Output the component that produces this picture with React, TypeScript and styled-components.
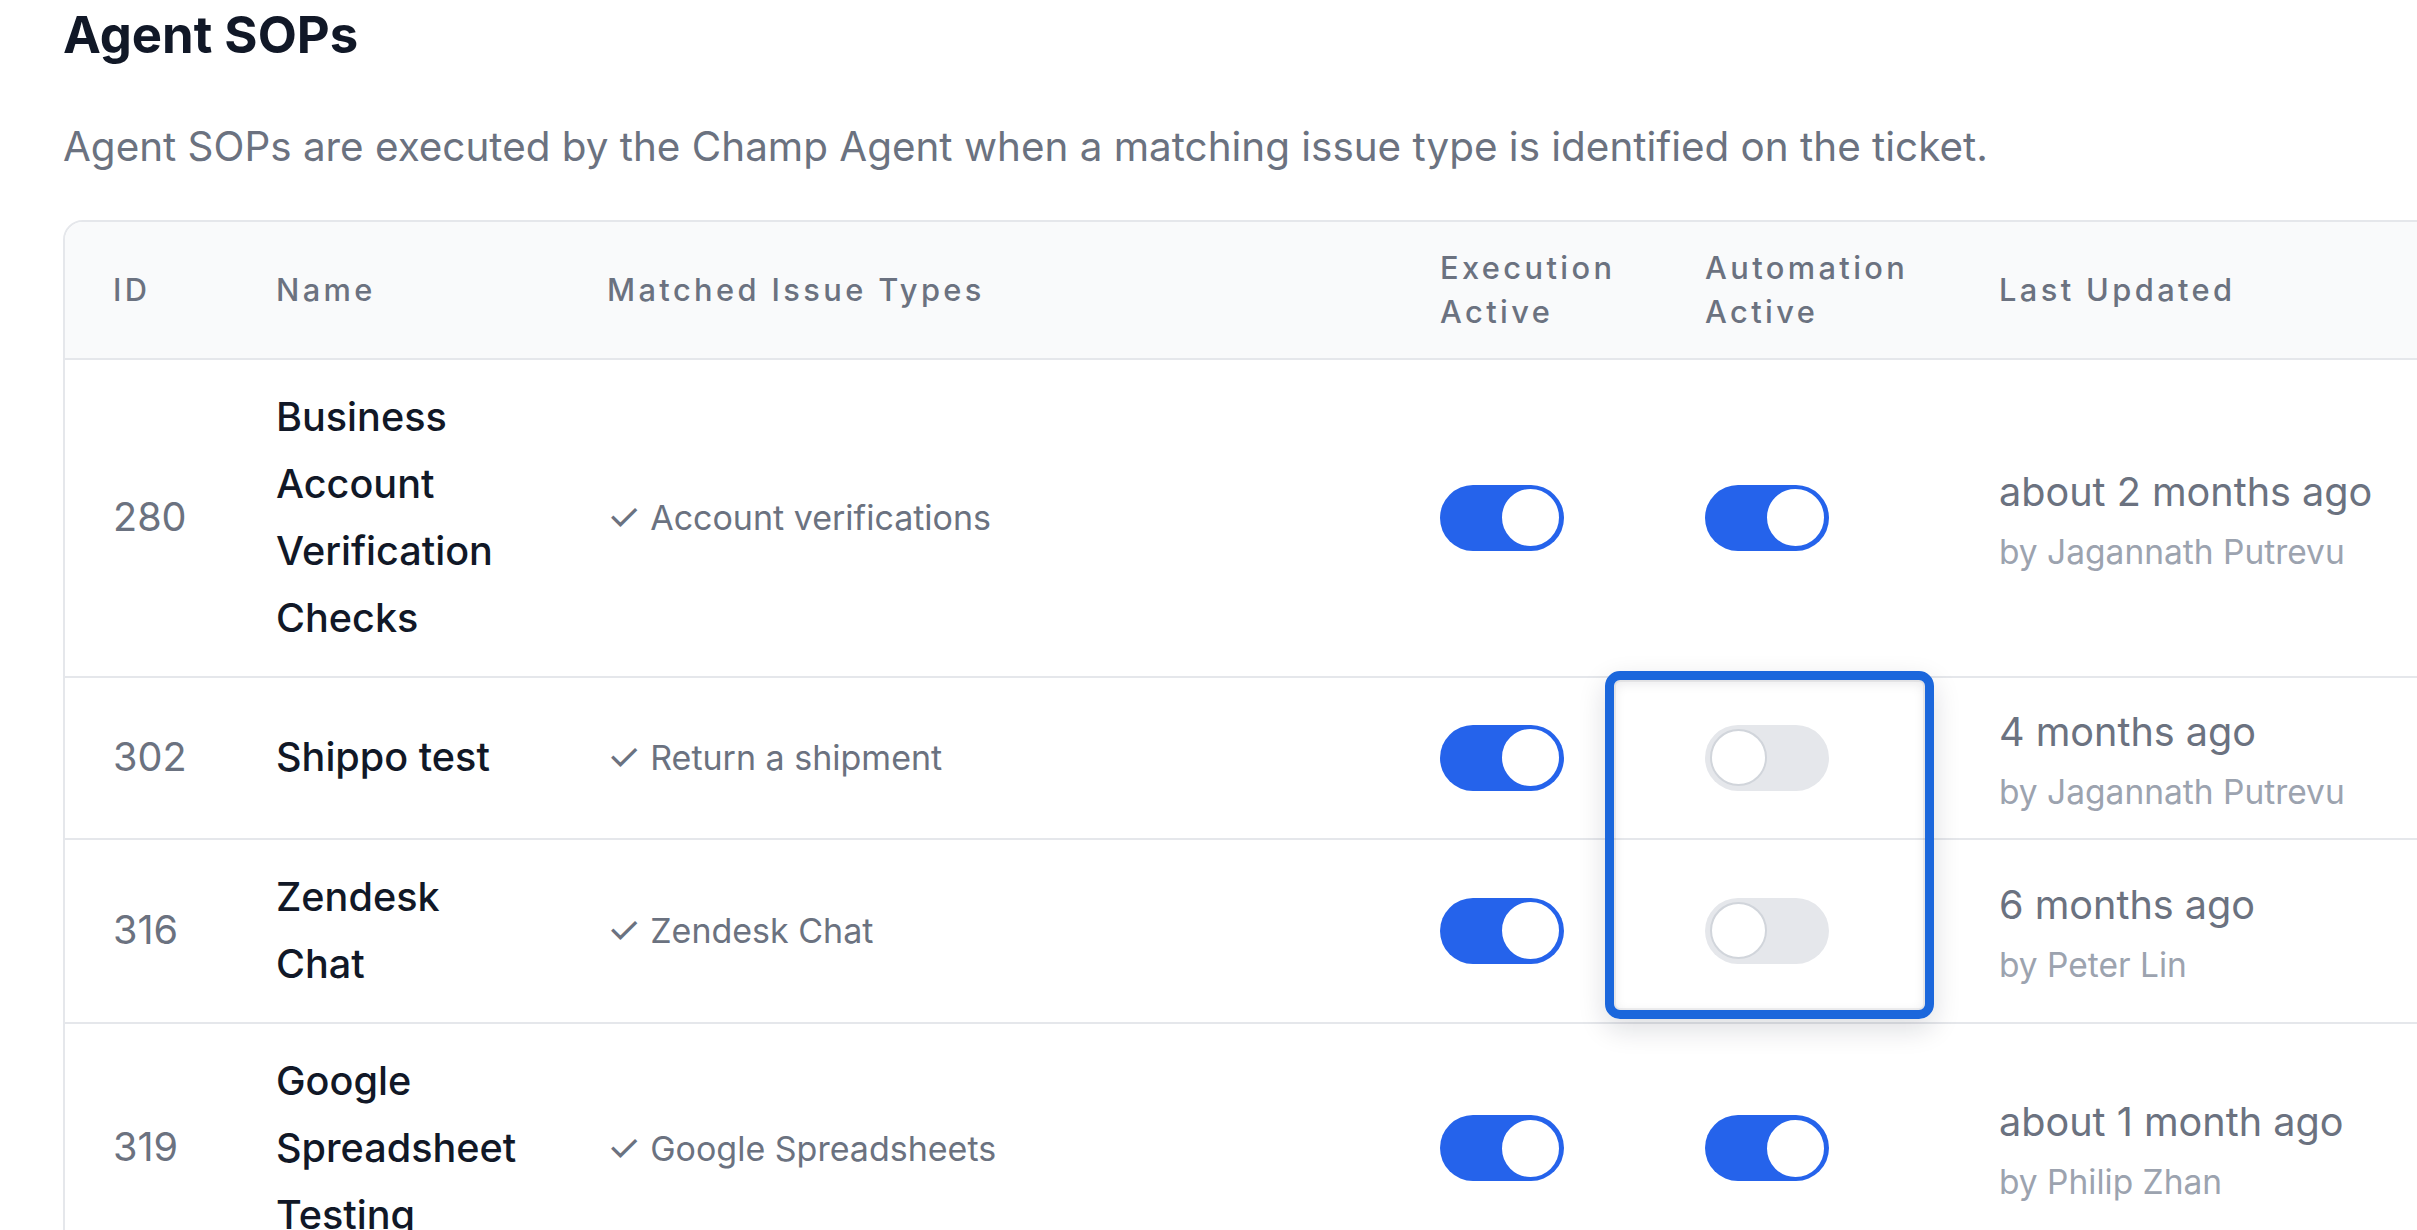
import React from 'react';
import styled, { createGlobalStyle } from 'styled-components';

const GlobalStyle = createGlobalStyle`
  html, body {
    margin: 0;
    padding: 0;
    background: #ffffff;
    overflow: hidden;
  }
  body {
    font-family: Inter, "Noto Sans", "Liberation Sans", sans-serif;
    -webkit-font-smoothing: antialiased;
  }
`;

const Page = styled.div`
  padding: 0 0 0 63px;
  width: 2600px;
`;

const Title = styled.h1`
  margin: 0;
  font-size: 50.8px;
  line-height: 70px;
  font-weight: 700;
  color: #111827;
`;

const Subtitle = styled.p`
  margin: 46px 0 0;
  font-size: 40.4px;
  line-height: 61.6px;
  color: #6b7280;
`;

const Card = styled.div`
  position: relative;
  margin-top: 42px;
  width: 2500px;
  border: 2px solid #e5e7eb;
  border-radius: 20px;
  background: #ffffff;
`;

const Row = styled.div<{ $head?: boolean }>`
  display: grid;
  grid-template-columns: 163px 331px 833px 265px 294px 1fr;
  align-items: center;
  border-bottom: 2px solid #e5e7eb;
  background: ${(p) => (p.$head ? '#f9fafb' : '#ffffff')};
  border-radius: ${(p) => (p.$head ? '18px 18px 0 0' : '0')};
`;

const HeadCell = styled.div`
  padding: 24px 48px;
  font-size: 30.8px;
  line-height: 44px;
  font-weight: 500;
  letter-spacing: 0.11em;
  color: #6b7280;
`;

const Cell = styled.div`
  padding: 24px 48px;
`;

const IdText = styled.span`
  font-size: 39.6px;
  line-height: 61.6px;
  color: #6b7280;
`;

const NameText = styled.div`
  font-size: 39.6px;
  line-height: 67px;
  font-weight: 500;
  color: #111827;
`;

const Match = styled.span`
  font-size: 34px;
  line-height: 52.8px;
  color: #6b7280;
`;

const Check = styled.span`
  font-size: 38px;
`;

const Updated = styled.div`
  font-size: 39.6px;
  line-height: 61.6px;
  color: #6b7280;
  white-space: nowrap;
`;

const ByLine = styled.div`
  margin-top: 6.4px;
  font-size: 33.5px;
  line-height: 44px;
  color: #9ca3af;
  white-space: nowrap;
`;

const Track = styled.div<{ $on: boolean }>`
  display: flex;
  align-items: center;
  justify-content: ${(p) => (p.$on ? 'flex-end' : 'flex-start')};
  box-sizing: border-box;
  width: 124px;
  height: 66px;
  padding: 0 5px;
  border-radius: 33px;
  background: ${(p) => (p.$on ? '#2563eb' : '#e5e7eb')};
`;

const Knob = styled.div<{ $on: boolean }>`
  box-sizing: border-box;
  width: 57px;
  height: 57px;
  border-radius: 50%;
  background: #ffffff;
  border: 2.5px solid ${(p) => (p.$on ? '#ffffff' : '#d1d5db')};
`;

const Highlight = styled.div`
  position: absolute;
  left: 1540px;
  top: 449px;
  width: 329px;
  height: 348px;
  box-sizing: border-box;
  border: 9px solid #1b67dc;
  border-radius: 15px;
  box-shadow: 0 10px 28px rgba(17, 24, 39, 0.14),
    inset 0 0 0 2px rgba(17, 24, 39, 0.06),
    inset 0 3px 12px rgba(17, 24, 39, 0.1);
  pointer-events: none;
`;

const Toggle = ({ on }: { on: boolean }) => (
  <Track $on={on}>
    <Knob $on={on} />
  </Track>
);

const sops = [
  { id: 280, name: 'Business Account Verification Checks', issue: 'Account verifications', exec: true, auto: true, when: 'about 2 months ago', by: 'Jagannath Putrevu' },
  { id: 302, name: 'Shippo test', issue: 'Return a shipment', exec: true, auto: false, when: '4 months ago', by: 'Jagannath Putrevu' },
  { id: 316, name: 'Zendesk Chat', issue: 'Zendesk Chat', exec: true, auto: false, when: '6 months ago', by: 'Peter Lin' },
  { id: 319, name: 'Google Spreadsheet Testing', issue: 'Google Spreadsheets', exec: true, auto: true, when: 'about 1 month ago', by: 'Philip Zhan' },
];

const App: React.FC = () => {
  return (
    <Page>
      <GlobalStyle />
      <Title>Agent SOPs</Title>
      <Subtitle>
        Agent SOPs are executed by the Champ Agent when a matching issue type is identified on the ticket.
      </Subtitle>
      <Card>
        <Row $head>
          <HeadCell>ID</HeadCell>
          <HeadCell>Name</HeadCell>
          <HeadCell>Matched Issue Types</HeadCell>
          <HeadCell>Execution Active</HeadCell>
          <HeadCell>Automation Active</HeadCell>
          <HeadCell>Last Updated</HeadCell>
        </Row>
        {sops.map((s) => (
          <Row key={s.id}>
            <Cell><IdText>{s.id}</IdText></Cell>
            <Cell><NameText>{s.name}</NameText></Cell>
            <Cell><Match><Check>✓</Check> {s.issue}</Match></Cell>
            <Cell><Toggle on={s.exec} /></Cell>
            <Cell><Toggle on={s.auto} /></Cell>
            <Cell>
              <Updated>{s.when}</Updated>
              <ByLine>by {s.by}</ByLine>
            </Cell>
          </Row>
        ))}
        <Highlight />
      </Card>
    </Page>
  );
};

export default App;
